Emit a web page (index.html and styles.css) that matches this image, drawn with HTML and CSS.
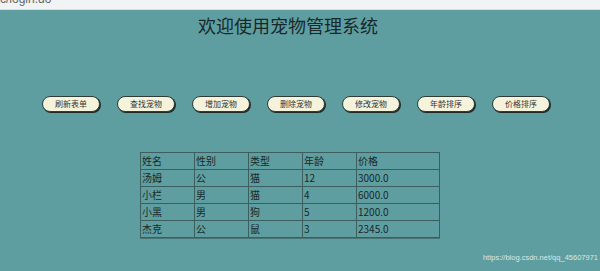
FILE: index.html
```html
<!DOCTYPE html>
<html>
<head>
<meta charset="utf-8">
<link rel="stylesheet" href="styles.css">
</head>
<body>
<div class="addr"><span class="url">c/login.do</span></div>
<div class="page">
  <h1 class="title">欢迎使用宠物管理系统</h1>
  <div class="buttons">
    <button class="btn">刷新表单</button>
    <button class="btn">查找宠物</button>
    <button class="btn">增加宠物</button>
    <button class="btn">删除宠物</button>
    <button class="btn">修改宠物</button>
    <button class="btn">年龄排序</button>
    <button class="btn">价格排序</button>
  </div>
  <table class="pets">
    <tr><td class="c1">姓名</td><td class="c2">性别</td><td class="c3">类型</td><td class="c4">年龄</td><td class="c5">价格</td></tr>
    <tr><td>汤姆</td><td>公</td><td>猫</td><td>12</td><td>3000.0</td></tr>
    <tr><td>小栏</td><td>男</td><td>猫</td><td>4</td><td>6000.0</td></tr>
    <tr><td>小黑</td><td>男</td><td>狗</td><td>5</td><td>1200.0</td></tr>
    <tr><td>杰克</td><td>公</td><td>鼠</td><td>3</td><td>2345.0</td></tr>
  </table>
  <div class="mark">https://blog.csdn.net/qq_45607971</div>
</div>
</body>
</html>
```
FILE: styles.css
```css
html, body {
  margin: 0;
  padding: 0;
  width: 600px;
  height: 271px;
  overflow: hidden;
  background: #5f9ea0;
  font-family: "Noto Sans CJK SC", "Noto Sans", sans-serif;
}
.addr {
  height: 9px;
  background: #f1f3f4;
  border-bottom: 1px solid #e6d6e2;
  overflow: hidden;
  position: relative;
}
.url {
  position: absolute;
  left: 0;
  top: -8px;
  font-size: 12px;
  line-height: 14px;
  color: #666;
  font-family: "Liberation Sans", sans-serif;
}
.page {
  display: flex;
  flex-direction: column;
  position: relative;
  height: 261px;
}
.title {
  margin: 2px 0 0 0;
  padding-left: 198px;
  font-size: 18px;
  font-weight: normal;
  line-height: 26px;
  color: #17282a;
}
.buttons {
  display: flex;
  gap: 17px;
  padding-left: 42px;
  margin-top: 58px;
}
.btn {
  box-sizing: border-box;
  width: 58px;
  height: 16px;
  padding: 0;
  border: 1px solid #2e3b36;
  border-radius: 8px;
  background: #f6f3dc;
  box-shadow: 1px 1px 0 #1f2a26;
  font-family: "Noto Sans CJK SC", sans-serif;
  font-size: 8px;
  line-height: 14px;
  color: #333;
}
.pets {
  margin-top: 40px;
  margin-left: 140px;
  width: 300px;
  border-collapse: collapse;
  border: 1px solid #3f5f60;
  box-shadow: 0 1px 0 #4a7374;
}
.pets td {
  border: 1px solid #3d5e5f;
  height: 16px;
  padding: 0 0 0 1px;
  font-size: 10px;
  line-height: 16px;
  color: #18292a;
  font-family: "Noto Sans CJK SC", sans-serif;
}
.c1, .c2, .c3, .c4 { width: 52px; }
.mark {
  position: absolute;
  right: 2px;
  top: 243px;
  font-family: "Liberation Sans", sans-serif;
  font-size: 7.5px;
  color: #d6e8e8;
}
```
